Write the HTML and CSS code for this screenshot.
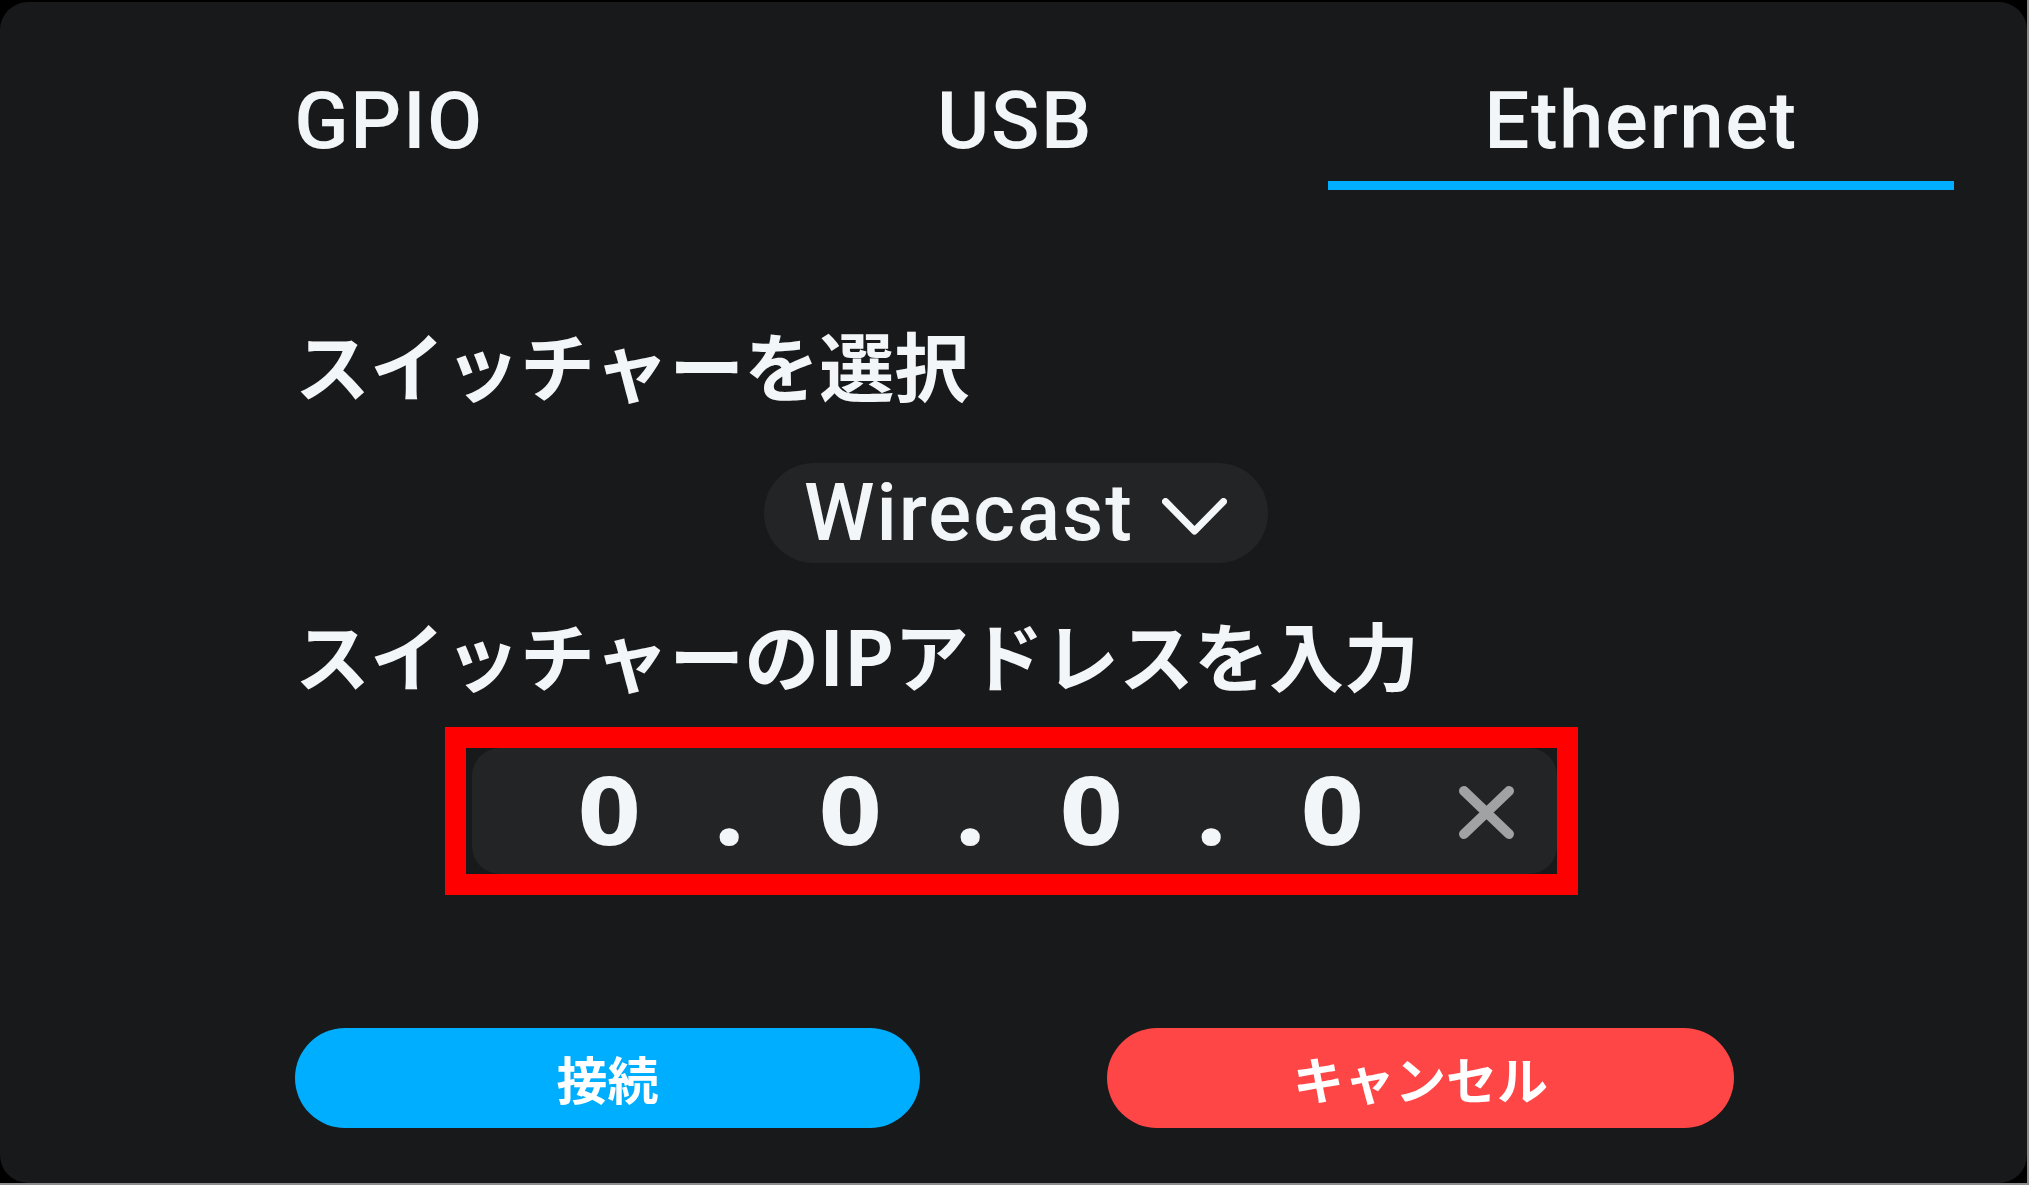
FILE: index.html
```html
<!DOCTYPE html>
<html lang="ja">
<head>
<meta charset="utf-8">
<title>Switcher connection</title>
<link rel="stylesheet" href="styles.css">
</head>
<body>
<div class="screen">
  <div class="panel">
    <nav class="tabs">
      <div class="tab">GPIO</div>
      <div class="tab">USB</div>
      <div class="tab active">Ethernet</div>
    </nav>
    <div class="content">
      <h2 class="label label-switcher">スイッチャーを選択</h2>
      <div class="select">
        <span class="select-text">Wirecast</span>
        <svg class="chevron" width="65" height="37" viewBox="0 0 65 37"><polyline points="3.5,3.5 32.5,33 61.5,3.5" fill="none" stroke="#f4f7f9" stroke-width="7" stroke-linecap="round" stroke-linejoin="round"/></svg>
      </div>
      <h2 class="label label-ip">スイッチャーのIPアドレスを入力</h2>
      <div class="ip-frame">
        <div class="ip-input">
          <div class="ip-digits">
            <span class="ip-cell">0</span>
            <span class="ip-cell dot">.</span>
            <span class="ip-cell">0</span>
            <span class="ip-cell dot">.</span>
            <span class="ip-cell">0</span>
            <span class="ip-cell dot">.</span>
            <span class="ip-cell">0</span>
          </div>
          <svg class="clear" width="57" height="55" viewBox="0 0 57 55"><path d="M6 6 L51 49 M51 6 L6 49" fill="none" stroke="#a0a2a4" stroke-width="10" stroke-linecap="round"/></svg>
        </div>
      </div>
      <div class="actions">
        <button class="btn btn-connect">接続</button>
        <button class="btn btn-cancel">キャンセル</button>
      </div>
    </div>
  </div>
</div>
</body>
</html>
```

FILE: styles.css
```css
html, body {
  margin: 0;
  padding: 0;
  background: #000;
  overflow: hidden;
}

.screen {
  width: 2029px;
  height: 1185px;
  box-sizing: border-box;
  padding-top: 2px;
  background: #000;
  border-right: 2px solid #8c8c8c;
  border-bottom: 2px solid #8c8c8c;
}

.panel {
  height: 100%;
  background: #18191b;
  border-radius: 28px;
  display: flex;
  flex-direction: column;
  color: #f3f6f8;
}

.tabs {
  display: grid;
  grid-template-columns: 626px 626px 626px;
  padding: 0 75px 0 76px;
}

.tab {
  font-family: Roboto, "Liberation Sans", sans-serif;
  font-weight: 500;
  font-size: 80px;
  line-height: 80px;
  letter-spacing: 1.5px;
  text-align: center;
  padding-top: 79px;
  padding-bottom: 20px;
  border-bottom: 9px solid transparent;
}

.tab.active {
  border-bottom-color: #00aeff;
}

.content {
  display: flex;
  flex-direction: column;
  padding-left: 295px;
}

.label {
  margin: 0;
  font-family: "Noto Sans CJK JP", sans-serif;
  font-weight: 700;
  font-size: 75px;
  line-height: 75px;
  color: #f3f6f8;
}

.label-switcher {
  margin-top: 136px;
}

.select {
  align-self: flex-start;
  margin-left: 469px;
  margin-top: 62px;
  height: 100px;
  box-sizing: border-box;
  padding: 0 41px 0 40px;
  border-radius: 50px;
  background: #222426;
  display: flex;
  align-items: center;
  gap: 28px;
}

.select-text {
  font-family: Roboto, "Liberation Sans", sans-serif;
  font-weight: 500;
  font-size: 80px;
  line-height: 80px;
  letter-spacing: 2px;
}

.chevron {
  margin-top: 7px;
  display: block;
}

.label-ip {
  margin-top: 53px;
}

.ip-frame {
  align-self: flex-start;
  margin-top: 36px;
  margin-left: 150px;
  width: 1091px;
  height: 126px;
  border: 21px solid #ff0000;
  background: #18191b;
}

.ip-input {
  margin-left: 6px;
  height: 126px;
  border-radius: 28px;
  background: #222426;
  display: flex;
  align-items: center;
  padding-left: 77px;
}

.ip-digits {
  display: flex;
  align-items: baseline;
  padding-bottom: 4px;
}

.ip-cell {
  width: 120.5px;
  text-align: center;
  font-family: "DejaVu Sans", sans-serif;
  font-weight: 700;
  font-size: 92px;
  line-height: 92px;
  color: #f3f6f8;
}

.ip-cell.dot {
  font-family: Roboto, "DejaVu Sans", sans-serif;
  font-size: 120px;
  line-height: 92px;
}

.clear {
  display: block;
  margin-left: 65px;
  margin-top: 2px;
}

.actions {
  margin-top: 133px;
  display: flex;
  gap: 187px;
}

.btn {
  width: 625px;
  height: 100px;
  border: none;
  border-radius: 50px;
  font-family: "Noto Sans CJK JP", sans-serif;
  font-weight: 700;
  font-size: 51px;
  color: #fff;
  padding: 0;
  display: flex;
  align-items: center;
  justify-content: center;
}

.btn-connect {
  background: #00aeff;
}

.btn-cancel {
  width: 627px;
  background: #ff4646;
}
```
